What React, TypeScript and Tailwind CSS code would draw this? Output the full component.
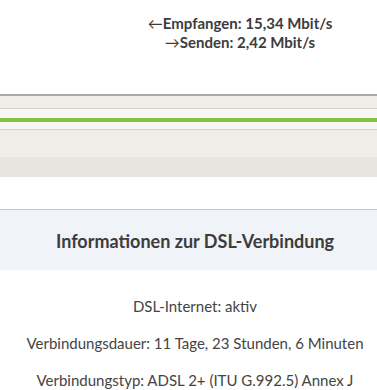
export default function App() {
  const lines = [
    "DSL-Internet: aktiv",
    "Verbindungsdauer: 11 Tage, 23 Stunden, 6 Minuten",
    "Verbindungstyp: ADSL 2+ (ITU G.992.5) Annex J",
  ];

  return (
    <div className="w-[377px] h-[390px] overflow-hidden bg-white font-['Lato','Liberation_Sans',sans-serif]">
      {/* throughput */}
      <div className="h-[94px] flex justify-end pr-[42px] pt-[14px]">
        <div className="w-[190px] text-center text-[15px] leading-[19px] font-bold text-[#3c3c3c]">
          <div>
            <span className="font-normal">←</span>Empfangen: 15,34 Mbit/s
          </div>
          <div>
            <span className="font-normal">→</span>Senden: 2,42 Mbit/s
          </div>
        </div>
      </div>

      {/* header bars */}
      <div className="h-[2px] bg-[#a9a9a9]" />
      <div className="h-[12px] bg-[#f0ede6]" />
      <div className="h-px bg-[#d3d1cc]" />
      <div className="h-[9px] bg-[#f8f7f4]" />
      <div className="h-[4px] bg-[#84c341]" />
      <div className="h-[7px] bg-[#f8f7f4]" />
      <div className="h-px bg-[#d3d1cc]" />
      <div className="h-[27px] bg-[#f0ede6]" />
      <div className="h-[20px] bg-[#e6e5e0]" />
      <div className="h-[32px]" />

      {/* section */}
      <div className="border-t border-[#c8cad0] bg-[#f0f3f8] h-[61px] flex items-center justify-center pt-[2px] pl-[13px]">
        <h2 className="text-[18px] font-bold text-[#3c3c3c]">Informationen zur DSL-Verbindung</h2>
      </div>

      <div className="flex flex-col items-center pt-[25px] pl-[13px] gap-[15px] text-[15px] leading-[22px] text-[#444]">
        {lines.map((l) => (
          <p key={l}>{l}</p>
        ))}
      </div>
    </div>
  );
}
